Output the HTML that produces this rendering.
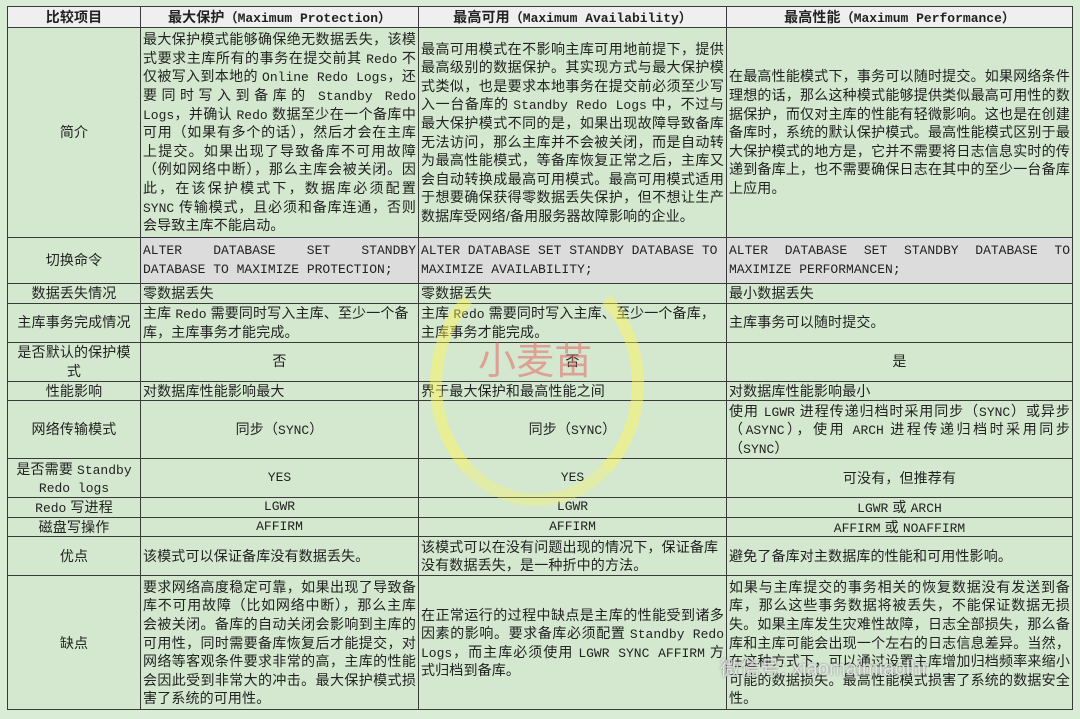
<!DOCTYPE html>
<html><head><meta charset="utf-8">
<style>
html,body{margin:0;padding:0;}
body{width:1080px;height:719px;background:#d9ecd5;position:relative;overflow:hidden;
font-family:"Liberation Sans","Noto Sans CJK SC",sans-serif;font-size:14px;letter-spacing:0.15px;color:#222;}
table{position:absolute;left:7px;top:6px;border-collapse:collapse;table-layout:fixed;width:1065px;background:#d3e8cf;}
td{border:1px solid #3a3a3a;padding:0 2px;line-height:18.6px;vertical-align:middle;overflow:hidden;}
td.c{text-align:center;}
td.j{text-align:justify;}
.m{font-family:"Liberation Mono","Noto Sans CJK SC",monospace;font-size:13px;letter-spacing:0;line-height:1;}
td.m{line-height:18.6px;}
tr.h td{background:#efefef;font-weight:bold;text-align:center;}
tr.g td.gr{background:#dcdcdc;}
.w1{position:absolute;left:430px;top:262px;width:190px;height:220px;border-radius:50%;border:12px solid rgba(255,245,80,0.45);border-top-color:transparent;border-bottom-color:rgba(255,245,80,0.3);pointer-events:none;}
.w2{position:absolute;left:478px;top:330px;font-size:38px;color:rgba(230,90,90,0.5);font-family:"Noto Sans CJK SC",sans-serif;}
.w3{position:absolute;left:720px;top:652px;font-size:20px;color:rgba(255,255,255,0.7);font-family:"Liberation Sans","Noto Sans CJK SC",sans-serif;text-shadow:0 0 2px #777;}
</style></head><body>
<table>
<colgroup><col style="width:133px"><col style="width:278px"><col style="width:308px"><col style="width:346px"></colgroup>
<tr class="h" style="height:21px"><td>比较项目</td><td>最大保护<span class="m">（Maximum Protection）</span></td><td>最高可用<span class="m">（Maximum Availability）</span></td><td>最高性能<span class="m">（Maximum Performance）</span></td></tr>
<tr style="height:210px"><td class="c">简介</td><td class="j">最大保护模式能够确保绝无数据丢失，该模式要求主库所有的事务在提交前其 <span class="m">Redo</span> 不仅被写入到本地的 <span class="m">Online Redo Logs</span>，还要同时写入到备库的 <span class="m">Standby Redo Logs</span>，并确认 <span class="m">Redo</span> 数据至少在一个备库中可用（如果有多个的话），然后才会在主库上提交。如果出现了导致备库不可用故障（例如网络中断），那么主库会被关闭。因此，在该保护模式下，数据库必须配置 <span class="m">SYNC</span> 传输模式，且必须和备库连通，否则会导致主库不能启动。</td><td class="j">最高可用模式在不影响主库可用地前提下，提供最高级别的数据保护。其实现方式与最大保护模式类似，也是要求本地事务在提交前必须至少写入一台备库的 <span class="m">Standby Redo Logs</span> 中，不过与最大保护模式不同的是，如果出现故障导致备库无法访问，那么主库并不会被关闭，而是自动转为最高性能模式，等备库恢复正常之后，主库又会自动转换成最高可用模式。最高可用模式适用于想要确保获得零数据丢失保护，但不想让生产数据库受网络/备用服务器故障影响的企业。</td><td class="j">在最高性能模式下，事务可以随时提交。如果网络条件理想的话，那么这种模式能够提供类似最高可用性的数据保护，而仅对主库的性能有轻微影响。这也是在创建备库时，系统的默认保护模式。最高性能模式区别于最大保护模式的地方是，它并不需要将日志信息实时的传递到备库上，也不需要确保日志在其中的至少一台备库上应用。</td></tr>
<tr class="g" style="height:46px"><td class="c">切换命令</td><td class="gr j m">ALTER DATABASE SET STANDBY DATABASE TO MAXIMIZE PROTECTION;</td><td class="gr m">ALTER DATABASE SET STANDBY DATABASE TO MAXIMIZE AVAILABILITY;</td><td class="gr j m">ALTER DATABASE SET STANDBY DATABASE TO MAXIMIZE PERFORMANCEN;</td></tr>
<tr style="height:19px"><td class="c">数据丢失情况</td><td>零数据丢失</td><td>零数据丢失</td><td>最小数据丢失</td></tr>
<tr style="height:39px"><td class="c">主库事务完成情况</td><td>主库 <span class="m">Redo</span> 需要同时写入主库、至少一个备库，主库事务才能完成。</td><td>主库 <span class="m">Redo</span> 需要同时写入主库、至少一个备库，主库事务才能完成。</td><td>主库事务可以随时提交。</td></tr>
<tr style="height:39px"><td class="c">是否默认的保护模<br>式</td><td class="c">否</td><td class="c">否</td><td class="c">是</td></tr>
<tr style="height:19px"><td class="c">性能影响</td><td>对数据库性能影响最大</td><td>界于最大保护和最高性能之间</td><td>对数据库性能影响最小</td></tr>
<tr style="height:58px"><td class="c">网络传输模式</td><td class="c">同步（<span class="m">SYNC</span>）</td><td class="c">同步（<span class="m">SYNC</span>）</td><td class="j">使用 <span class="m">LGWR</span> 进程传递归档时采用同步（<span class="m">SYNC</span>）或异步（<span class="m">ASYNC</span>），使用 <span class="m">ARCH</span> 进程传递归档时采用同步（<span class="m">SYNC</span>）</td></tr>
<tr style="height:39px"><td class="c">是否需要 <span class="m">Standby</span><br><span class="m">Redo logs</span></td><td class="c m">YES</td><td class="c m">YES</td><td class="c">可没有，但推荐有</td></tr>
<tr style="height:19px"><td class="c"><span class="m">Redo</span> 写进程</td><td class="c m">LGWR</td><td class="c m">LGWR</td><td class="c"><span class="m">LGWR</span> 或 <span class="m">ARCH</span></td></tr>
<tr style="height:19px"><td class="c">磁盘写操作</td><td class="c m">AFFIRM</td><td class="c m">AFFIRM</td><td class="c"><span class="m">AFFIRM</span> 或 <span class="m">NOAFFIRM</span></td></tr>
<tr style="height:39px"><td class="c">优点</td><td>该模式可以保证备库没有数据丢失。</td><td>该模式可以在没有问题出现的情况下，保证备库没有数据丢失，是一种折中的方法。</td><td>避免了备库对主数据库的性能和可用性影响。</td></tr>
<tr style="height:134px"><td class="c">缺点</td><td class="j">要求网络高度稳定可靠，如果出现了导致备库不可用故障（比如网络中断），那么主库会被关闭。备库的自动关闭会影响到主库的可用性，同时需要备库恢复后才能提交，对网络等客观条件要求非常的高，主库的性能会因此受到非常大的冲击。最大保护模式损害了系统的可用性。</td><td class="j">在正常运行的过程中缺点是主库的性能受到诸多因素的影响。要求备库必须配置 <span class="m">Standby Redo Logs</span>，而主库必须使用 <span class="m">LGWR SYNC AFFIRM</span> 方式归档到备库。</td><td class="j">如果与主库提交的事务相关的恢复数据没有发送到备库，那么这些事务数据将被丢失，不能保证数据无损失。如果主库发生灾难性故障，日志全部损失，那么备库和主库可能会出现一个左右的日志信息差异。当然，在这种方式下，可以通过设置主库增加归档频率来缩小可能的数据损失。最高性能模式损害了系统的数据安全性。</td></tr>
</table>
<div class="w1"></div>
<div class="w2">小麦苗</div>
<div class="w3">微信号: xiaomaimiaolhr</div>
</body></html>
